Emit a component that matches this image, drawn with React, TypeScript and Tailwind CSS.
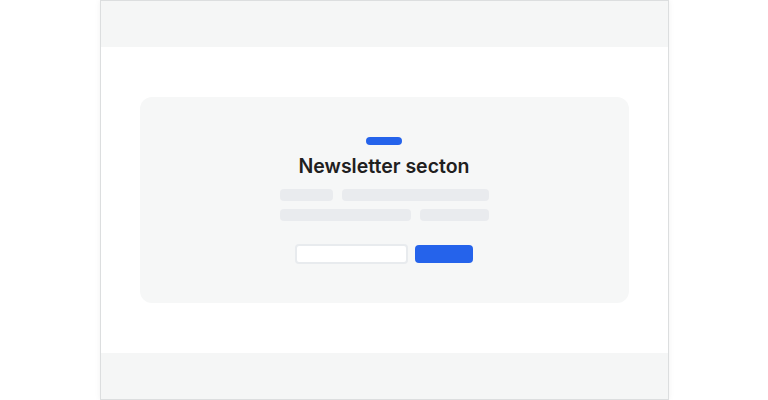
export default function App() {
  return (
    <div className="flex h-[400px] w-full justify-center bg-white font-['Inter',sans-serif]">
      <div className="flex h-[400px] w-[569px] flex-col border border-[#dcdedf] bg-white shadow-[0_0_6px_rgba(0,0,0,0.06)]">
        <div className="h-[46px] bg-[#f5f6f6]" />
        <div className="flex flex-1 px-[39px] py-[50px]">
          <div className="flex flex-1 flex-col items-center rounded-xl bg-[#f6f7f7] pt-[40px]">
            <div className="h-2 w-9 rounded-full bg-[#2563eb]" />
            <h2 className="mt-[7px] text-[19.5px] leading-7 font-semibold text-[#1f2020]">
              Newsletter secton
            </h2>
            <div className="mt-[9px] flex flex-col gap-2">
              <div className="flex gap-[9px]">
                <div className="h-3 w-[53px] rounded bg-[#e9ebee]" />
                <div className="h-3 w-[147px] rounded bg-[#e9ebee]" />
              </div>
              <div className="flex gap-[9px]">
                <div className="h-3 w-[131px] rounded bg-[#e9ebee]" />
                <div className="h-3 w-[69px] rounded bg-[#e9ebee]" />
              </div>
            </div>
            <div className="mt-[23px] flex items-center gap-[7px]">
              <div className="h-5 w-[113px] rounded border-2 border-[#e8ebee] bg-white" />
              <div className="h-[18px] w-[58px] rounded bg-[#2563eb]" />
            </div>
          </div>
        </div>
        <div className="h-[46px] bg-[#f5f6f6]" />
      </div>
    </div>
  );
}
